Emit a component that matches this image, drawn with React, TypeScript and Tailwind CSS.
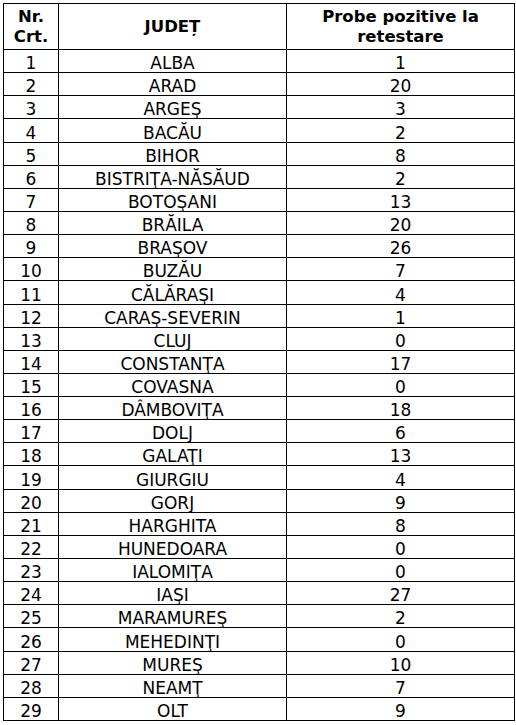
import React from "react";

const rows: [string, number][] = [
  ["ALBA", 1],
  ["ARAD", 20],
  ["ARGEŞ", 3],
  ["BACĂU", 2],
  ["BIHOR", 8],
  ["BISTRIŢA-NĂSĂUD", 2],
  ["BOTOŞANI", 13],
  ["BRĂILA", 20],
  ["BRAŞOV", 26],
  ["BUZĂU", 7],
  ["CĂLĂRAŞI", 4],
  ["CARAŞ-SEVERIN", 1],
  ["CLUJ", 0],
  ["CONSTANŢA", 17],
  ["COVASNA", 0],
  ["DÂMBOVIŢA", 18],
  ["DOLJ", 6],
  ["GALAŢI", 13],
  ["GIURGIU", 4],
  ["GORJ", 9],
  ["HARGHITA", 8],
  ["HUNEDOARA", 0],
  ["IALOMIŢA", 0],
  ["IAŞI", 27],
  ["MARAMUREŞ", 2],
  ["MEHEDINŢI", 0],
  ["MUREŞ", 10],
  ["NEAMŢ", 7],
  ["OLT", 9],
];

const cell =
  "flex items-end justify-center border-r border-b border-black text-[17px] leading-[18px] whitespace-nowrap";
const head =
  "flex items-center justify-center text-center border-r border-b border-black font-bold text-[16.5px] leading-[19.5px]";

export default function App() {
  return (
    <div
      className="w-[516px] h-[725px] bg-white pt-[3px] pl-[3px] text-black"
      style={{ fontFamily: '"DejaVu Sans", Verdana, sans-serif' }}
    >
      <div className="box-border grid w-[512px] h-[718px] border-t border-l border-black grid-cols-[55px_228px_228px] grid-rows-[46px_repeat(29,1fr)]">
        <div className={head}>
          Nr.
          <br />
          Crt.
        </div>
        <div className={head}>JUDEȚ</div>
        <div className={head}>
          Probe pozitive la
          <br />
          retestare
        </div>
        {rows.map(([name, n], i) => (
          <React.Fragment key={name}>
            <div className={cell}>{i + 1}</div>
            <div className={cell}>{name}</div>
            <div className={cell}>{n}</div>
          </React.Fragment>
        ))}
      </div>
    </div>
  );
}
